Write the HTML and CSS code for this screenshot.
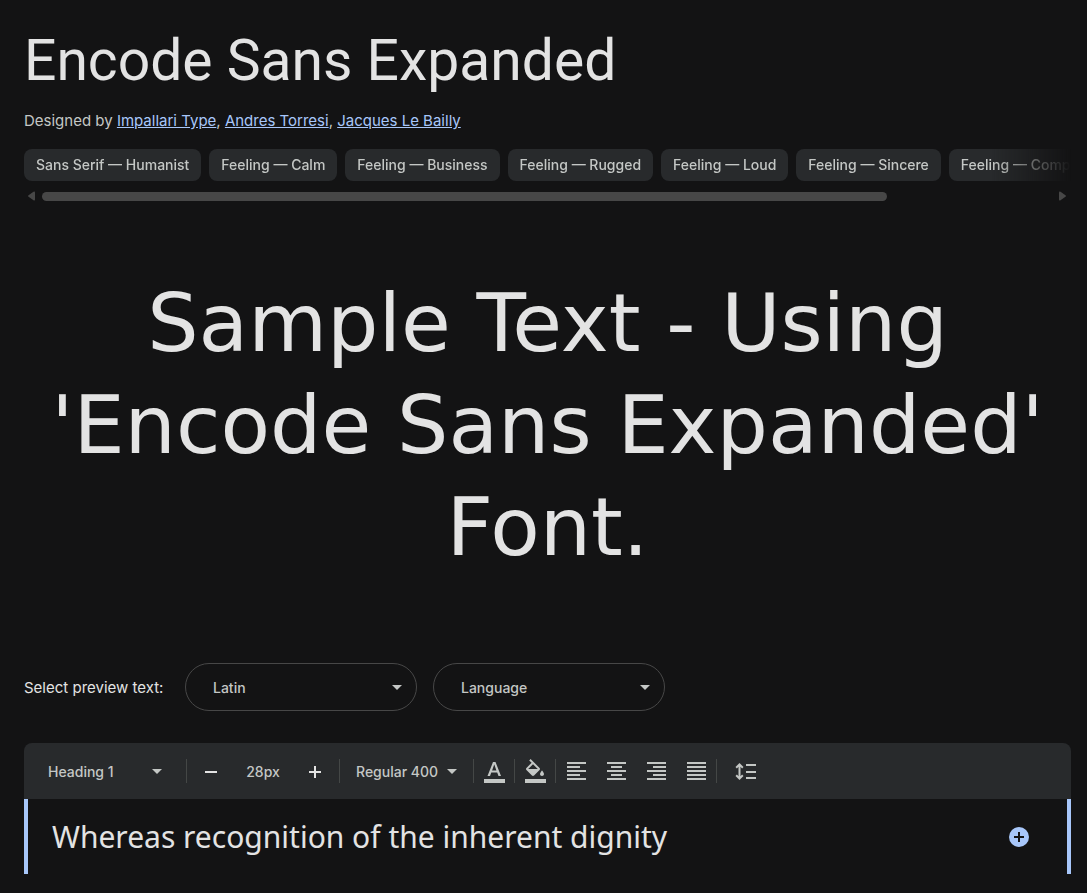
FILE: index.html
```html
<!DOCTYPE html>
<html lang="en">
<head>
    <meta charset="UTF-8">
    <meta name="viewport" content="width=device-width, initial-scale=1.0">
    <title>Encode Sans Expanded</title>
    <link rel="stylesheet" href="styles.css">
</head>
<body>
    <header class="font-header">
        <h1 class="font-title">Encode Sans Expanded</h1>
        <p class="designers">Designed by <a href="#">Impallari Type</a>, <a href="#">Andres Torresi</a>, <a href="#">Jacques Le Bailly</a></p>
    </header>

    <div class="chips">
        <a class="chip" href="#">Sans Serif — Humanist</a>
        <a class="chip" href="#">Feeling — Calm</a>
        <a class="chip" href="#">Feeling — Business</a>
        <a class="chip" href="#">Feeling — Rugged</a>
        <a class="chip" href="#">Feeling — Loud</a>
        <a class="chip" href="#">Feeling — Sincere</a>
        <a class="chip" href="#">Feeling — Competent</a>
    </div>
    <div class="scrollbar">
        <svg class="scroll-arrow" viewBox="0 0 10 10"><path d="M8 1.500v7q0 1.500-1.500 .8L1.500 5.800q-1-.8 0-1.600L6.500 .7Q8 0 8 1.500z"/></svg>
        <div class="scroll-track"><div class="scroll-thumb"></div></div>
        <svg class="scroll-arrow" viewBox="0 0 10 10"><path d="M1 1.500v7q0 1.500 1.500 .8l5-3.500q1-.8 0-1.600L2.500 .7Q1 0 1 1.500z"/></svg>
    </div>

    <p class="sample">Sample Text - Using 'Encode Sans Expanded' Font.</p>

    <!-- Script and language pickers -->
    <form class="preview-form">
        <label class="preview-label" for="scriptSelect">Select preview text:</label>
        <div class="select-box">
            <select id="scriptSelect">
                <option>Latin</option>
            </select>
        </div>
        <div class="select-box">
            <select id="languageSelect" aria-label="Language">
                <option>Language</option>
            </select>
        </div>
    </form>

    <div class="toolbar">
        <div class="tool-select tool-style">
            <select aria-label="Text style">
                <option>Heading 1</option>
            </select>
        </div>
        <span class="divider"></span>
        <div class="size-group">
            <button class="tool" type="button" aria-label="Smaller">
                <svg viewBox="0 0 24 24"><path d="M6 12h12v2H6z"/></svg>
            </button>
            <input class="size-input" type="text" value="28px" aria-label="Font size">
            <button class="tool" type="button" aria-label="Larger">
                <svg viewBox="0 0 24 24"><path d="M6 12h5V7h2v5h5v2h-5v5h-2v-5H6z"/></svg>
            </button>
        </div>
        <span class="divider"></span>
        <div class="tool-select tool-weight">
            <select aria-label="Weight">
                <option>Regular 400</option>
            </select>
        </div>
        <span class="divider"></span>
        <button class="tool" type="button" aria-label="Text color">
            <svg viewBox="0 0 24 24"><path d="M2 20h21v4H2zM5.500 17 11 3h2.500L19 17h-2.500l-1.300-3.500H9.300L8 17H5.500zm4.600-5.600h4.300L12.300 5.600h-.1L10.100 11.400z"/></svg>
        </button>
        <span class="divider"></span>
        <button class="tool" type="button" aria-label="Fill color">
            <svg viewBox="0 0 24 24"><path d="M16.560 8.940 7.620 0 6.210 1.410l2.380 2.380-5.150 5.150c-.59.59-.59 1.540 0 2.120l5.500 5.500c.29.29.68.44 1.060.44s.77-.15 1.060-.44l5.500-5.500c.59-.58.59-1.530 0-2.120zM5.210 10 10 5.210 14.790 10H5.210zM19 11.500s-2 2.170-2 3.500c0 1.100.9 2 2 2s2-.9 2-2c0-1.330-2-3.500-2-3.500zM2 20h21v4H2v-4z"/></svg>
        </button>
        <span class="divider"></span>
        <div class="align-group">
            <button class="tool" type="button" aria-label="Align left">
                <svg viewBox="0 0 24 24"><path d="M3 3h19v2H3zM3 7h13v2H3zM3 11h19v2H3zM3 15h13v2H3zM3 19h19v2H3z"/></svg>
            </button>
            <button class="tool" type="button" aria-label="Align center">
                <svg viewBox="0 0 24 24"><path d="M3 3h19v2H3zM7 7h11v2H7zM3 11h19v2H3zM7 15h11v2H7zM3 19h19v2H3z"/></svg>
            </button>
            <button class="tool" type="button" aria-label="Align right">
                <svg viewBox="0 0 24 24"><path d="M3 3h19v2H3zM9 7h13v2H9zM3 11h19v2H3zM9 15h13v2H9zM3 19h19v2H3z"/></svg>
            </button>
            <button class="tool" type="button" aria-label="Justify">
                <svg viewBox="0 0 24 24"><path d="M3 3h19v2H3zM3 7h19v2H3zM3 11h19v2H3zM3 15h19v2H3zM3 19h19v2H3z"/></svg>
            </button>
        </div>
        <span class="divider"></span>
        <button class="tool tool-spacing" type="button" aria-label="Line height">
            <svg viewBox="0 0 24 24"><path d="M13 5h10v2H13zM13 12h10v2H13zM13 18h10v2H13zM6.500 4l4 4-1.400 1.400-1.600-1.600v9.400l1.600-1.600 1.400 1.400-4 4-4-4 1.400-1.400 1.600 1.600V7.800L3.900 9.400 2.500 8z"/></svg>
        </button>
    </div>

    <div class="editor">
        <p class="editor-text">Whereas recognition of the inherent dignity</p>
        <button class="add-button" type="button" aria-label="Add">
            <svg viewBox="0 0 20 20"><path d="M5 9h4V5h2v4h4v2h-4v4H9v-4H5z"/></svg>
        </button>
    </div>
</body>
</html>
```
FILE: styles.css
```css
* {
    box-sizing: border-box;
}

body {
    margin: 0;
    padding: 29px 16px 16px 24px;
    background-color: #131314;
    color: #e3e3e3;
    font-family: Inter, Roboto, Arial, sans-serif;
    font-size: 15px;
}

.font-title {
    margin: 0;
    font-family: Roboto, Arial, sans-serif;
    font-size: 57px;
    font-weight: 400;
    line-height: 64px;
}

.designers {
    margin: 16px 0;
    color: #c4c7c5;
    line-height: 24px;
}

.designers a {
    color: #a8c7fa;
}

/* Tag chips, faded out at the right edge */
.chips {
    display: flex;
    gap: 8px;
    overflow: hidden;
    -webkit-mask-image: linear-gradient(to left, transparent, #000 80px);
    mask-image: linear-gradient(to left, transparent, #000 80px);
}

.chip {
    flex: none;
    padding: 0 12px;
    border-radius: 8px;
    background-color: #282a2c;
    color: #c4c7c5;
    font-size: 14px;
    font-weight: 500;
    line-height: 32px;
    text-decoration: none;
}

.scrollbar {
    display: flex;
    align-items: center;
    gap: 5px;
    margin-top: 10px;
    padding: 0 3px;
}

.scroll-arrow {
    flex: none;
    width: 10px;
    height: 10px;
    fill: #474747;
}

.scroll-track {
    flex: 1;
}

.scroll-thumb {
    width: 83.6%;
    height: 9px;
    border-radius: 5px;
    background-color: #474747;
}

/* Big sample */
.sample {
    margin: 71px 0 85px;
    font-family: "DejaVu Sans", Verdana, sans-serif;
    font-size: 81px;
    line-height: 102px;
    text-align: center;
}

.preview-form {
    display: flex;
    align-items: center;
    gap: 16px;
    margin-bottom: 32px;
}

.preview-label {
    min-width: 145px;
}

.select-box {
    display: grid;
    align-items: center;
    width: 232px;
}

.select-box select,
.tool-select select {
    grid-area: 1 / 1;
    appearance: none;
    border: 0;
    background: none;
    color: #c4c7c5;
    font-family: inherit;
    font-size: 14px;
    font-weight: 500;
}

.select-box select {
    height: 48px;
    padding: 0 27px;
    border: 1px solid #474747;
    border-radius: 24px;
}

/* Dropdown arrow */
.select-box::after,
.tool-select::after {
    content: "";
    grid-area: 1 / 1;
    justify-self: end;
    border: 5px solid transparent;
    border-top-color: #c4c7c5;
    border-bottom: 0;
    pointer-events: none;
}

.select-box::after {
    margin-right: 15px;
}

.toolbar {
    display: flex;
    align-items: center;
    height: 56px;
    padding-left: 24px;
    border-radius: 8px 8px 0 0;
    background-color: #282a2c;
}

.tool-select {
    display: grid;
    align-items: center;
}

.tool-select select {
    padding: 0;
}

.tool-style {
    width: 114px;
    margin-right: 24px;
}

.tool-weight {
    width: 101px;
    margin: 0 16px;
}

.divider {
    width: 1px;
    height: 24px;
    background-color: #444746;
}

.size-group {
    display: flex;
    align-items: center;
    margin: 0 12px;
}

.size-input {
    width: 80px;
    padding: 0;
    border: 0;
    background: none;
    color: #c4c7c5;
    font-family: inherit;
    font-size: 14px;
    font-weight: 500;
    text-align: center;
}

.tool {
    display: flex;
    margin: 0 8px;
    padding: 0;
    border: 0;
    background: none;
    fill: #c4c7c5;
}

.tool svg {
    width: 24px;
    height: 24px;
}

.size-group .tool {
    margin: 0;
    fill: #e3e3e3;
}

.align-group {
    display: flex;
}

.tool-spacing {
    margin-left: 16px;
}

/* Editable preview line */
.editor {
    display: flex;
    align-items: center;
    justify-content: space-between;
    padding: 18px 38px 17px 24px;
    border: solid #a8c7fa;
    border-width: 0 4px;
}

.editor-text {
    margin: 0;
    font-family: "Noto Sans", sans-serif;
    font-size: 30px;
    line-height: 40px;
}

.add-button {
    display: flex;
    padding: 0;
    border: 0;
    border-radius: 50%;
    background-color: #a8c7fa;
    fill: #131314;
}

.add-button svg {
    width: 20px;
    height: 20px;
}
```
